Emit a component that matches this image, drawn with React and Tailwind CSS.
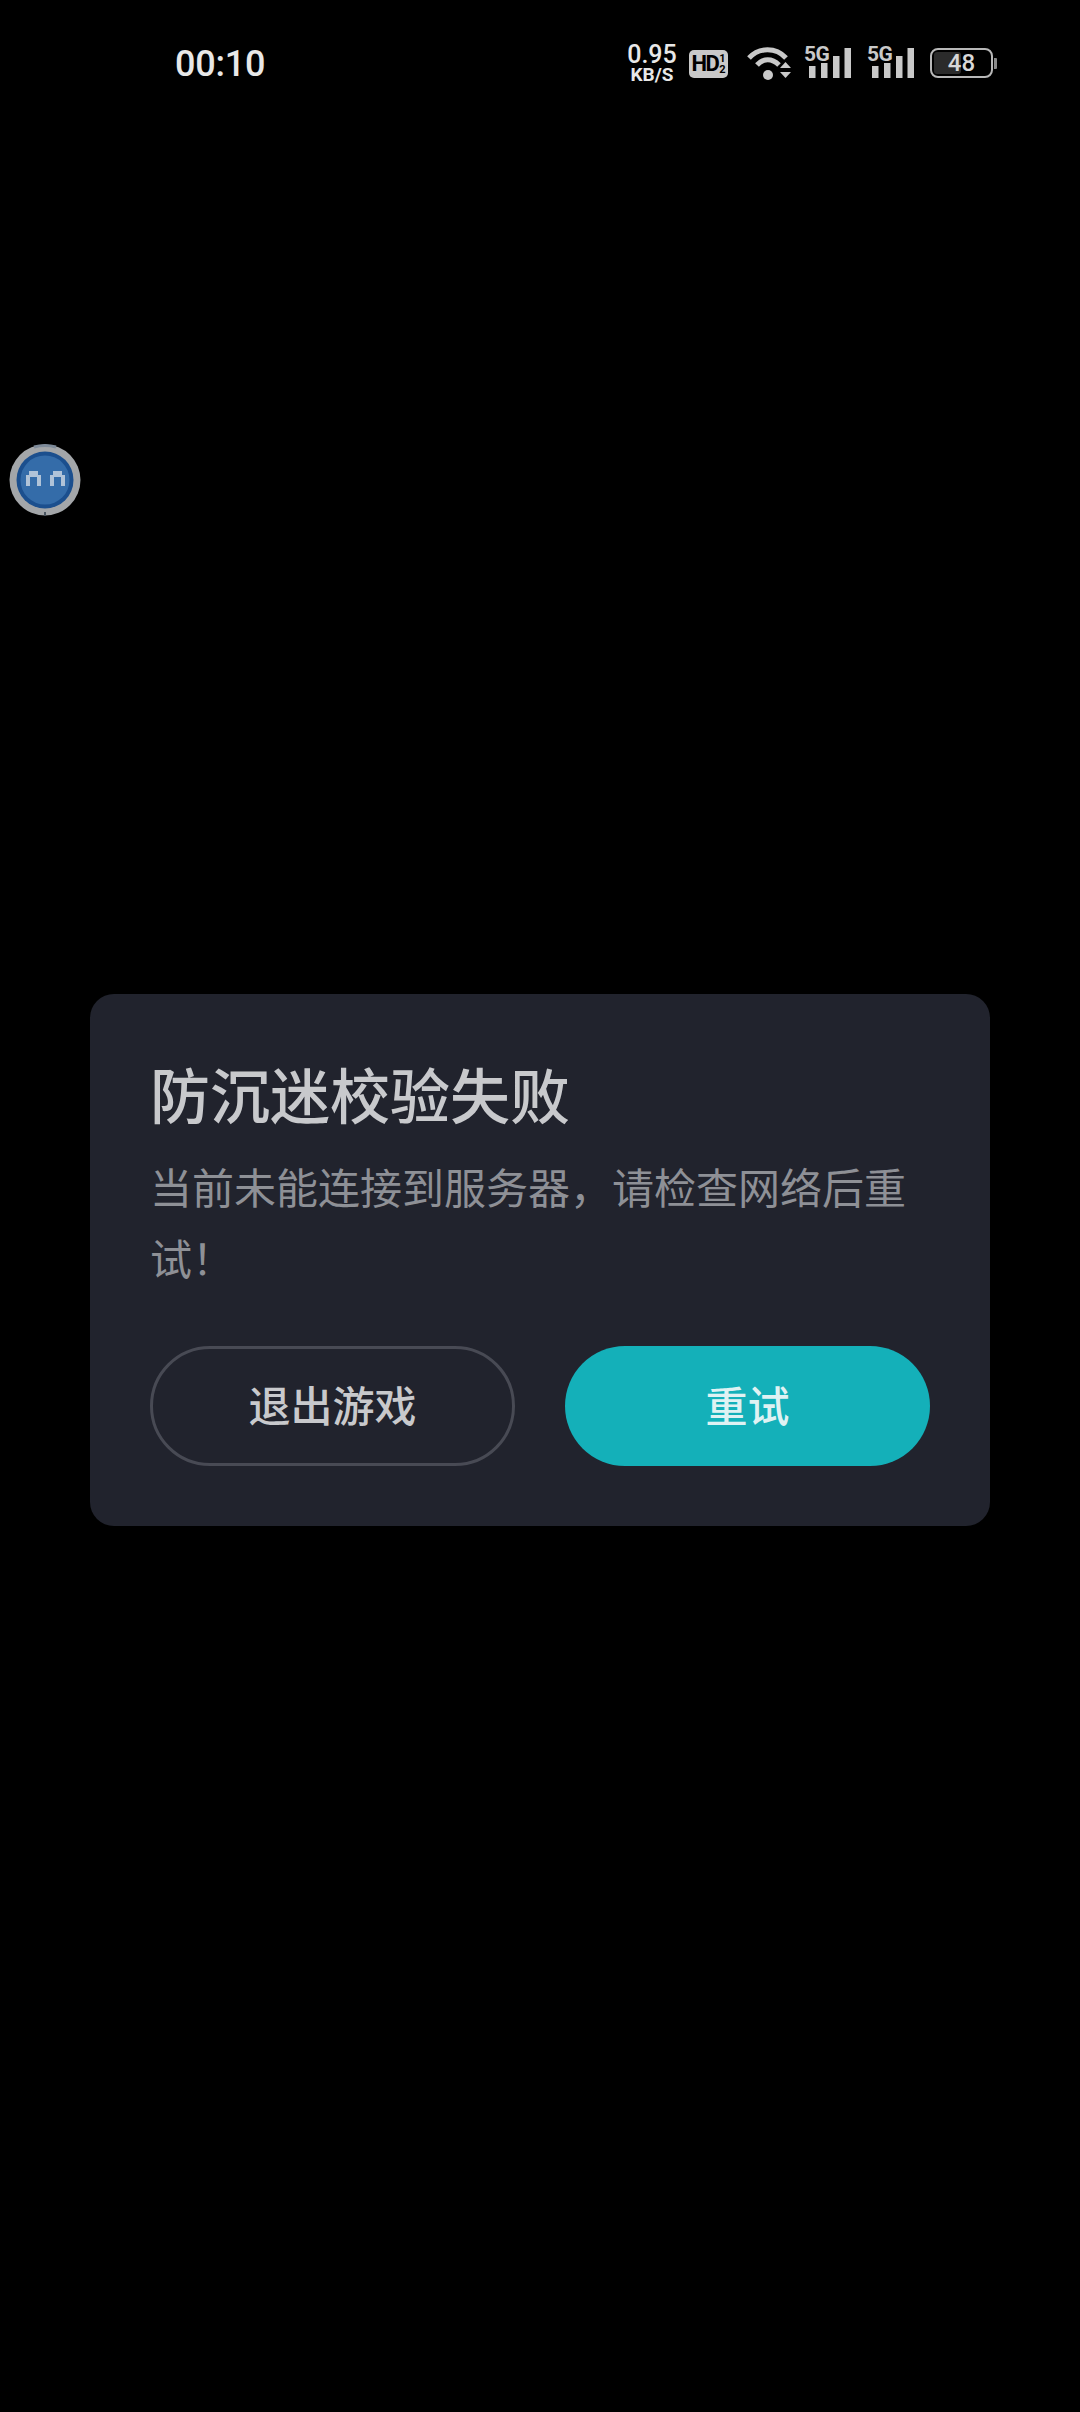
function SignalIcon() {
    return (
        <div className="relative h-[34px] w-[48px]">
            <span className="absolute left-[-1px] top-[-3px] text-[21px] font-bold leading-[22px] tracking-[-0.5px] text-[#c9c9c9]">5G</span>
            <svg width="48" height="34" viewBox="0 0 48 34" className="block">
                <rect x="4" y="20" width="6.5" height="12" fill="#c9c9c9" />
                <rect x="16" y="17" width="6.5" height="15" fill="#c9c9c9" />
                <rect x="28" y="10" width="6.5" height="22" fill="#c9c9c9" />
                <rect x="39.5" y="2" width="6.5" height="30" fill="#c9c9c9" />
            </svg>
        </div>
    )
}

function WifiIcon() {
    return (
        <svg width="46" height="34" viewBox="0 0 46 34" className="block">
            <path d="M2 12 C 12 1, 29 1, 39 12" fill="none" stroke="#c9c9c9" strokeWidth="5" />
            <path d="M10 19 C 16 12, 25 12, 32 19" fill="none" stroke="#c9c9c9" strokeWidth="5" />
            <circle cx="21" cy="29" r="5" fill="#c9c9c9" />
            <path d="M33 22 L38.5 16 L44 22 Z" fill="#c9c9c9" />
            <path d="M33 26 L44 26 L38.5 32 Z" fill="#c9c9c9" />
        </svg>
    )
}

function StatusBar() {
    return (
        <div className="flex h-[128px] items-start pl-[175px] pt-[42px] text-[#e8e8e8]" style={{ fontFamily: "Roboto, sans-serif" }}>
            <span className="w-[453px] text-[36px] font-medium leading-[44px] tracking-[-0.2px]">00:10</span>
            <div className="flex w-[48px] flex-col items-center pt-[3px] font-medium">
                <span className="text-[25px] leading-[20px]">0.95</span>
                <span className="text-[19px] font-bold leading-[20px]">KB/S</span>
            </div>
            <div className="ml-[13px] mt-[8px] flex h-[28px] w-[39px] items-center justify-center rounded-[5px] bg-[#c9c9c9] text-black">
                <span className="text-[22px] font-bold leading-none tracking-[-1.5px]">HD</span>
                <span className="ml-[1px] flex flex-col items-center text-[11px] font-bold leading-[11px]">
                    <span>1</span>
                    <span>2</span>
                </span>
            </div>
            <div className="ml-[19px] mt-[4px]">
                <WifiIcon />
            </div>
            <div className="ml-[12px] mt-[4px]">
                <SignalIcon />
            </div>
            <div className="ml-[15px] mt-[4px]">
                <SignalIcon />
            </div>
            <div className="ml-[14px] mt-[6px] flex items-center">
                <div className="relative flex h-[30px] w-[63px] items-center justify-center overflow-hidden rounded-[8px] border-2 border-[#b8b8b8] p-[2px]">
                    <div className="absolute bottom-[2px] left-[2px] top-[2px] w-[27px] rounded-[3px] bg-[#2b2b2b]" />
                    <span className="relative text-[24px] font-medium leading-none text-[#d8d8d8]">48</span>
                </div>
                <div className="ml-[1px] h-[11px] w-[3px] rounded-r-[1px] bg-[#8a8a8a]" />
            </div>
        </div>
    )
}

function FloatingBall() {
    return (
        <div className="absolute left-[9px] top-[444px] h-[72px] w-[72px]">
            <svg width="72" height="72" viewBox="0 0 72 72" className="block">
                <circle cx="36" cy="36" r="35.5" fill="#a3a6a9" />
                <path d="M25 3 Q 36 0, 47 3" fill="none" stroke="#7d8a99" strokeWidth="3" />
                <rect x="35" y="68" width="2" height="4" fill="#4a5560" />
                <circle cx="36" cy="36" r="28.5" fill="#1b4f8e" />
                <circle cx="36" cy="36" r="24.5" fill="#346ca9" />
                <path d="M17 42 V31 H20 V27 H29 V31 H32 V42 H28 V33 H21 V42 Z" fill="#b0c3d8" />
                <path d="M41 42 V31 H44 V27 H53 V31 H56 V42 H52 V33 H45 V42 Z" fill="#b0c3d8" />
            </svg>
        </div>
    )
}

export default function App() {
    return (
        <div className="relative h-[2412px] w-[1080px] overflow-hidden bg-black" style={{ fontFamily: '"Noto Sans CJK SC", sans-serif' }}>
            <StatusBar />
            <FloatingBall />
            <div className="ml-[90px] mt-[866px] w-[900px] rounded-[24px] bg-[#21232d] px-[60px] pb-[60px] pt-[63px]">
                <h1 className="text-[60px] font-medium leading-[72px] text-[#c8c9cc]">防沉迷校验失败</h1>
                <p className="mt-[21px] text-[42px] leading-[71px] text-[#8e9096]">当前未能连接到服务器，请检查网络后重试！</p>
                <div className="mt-[54px] flex justify-between">
                    <button className="flex h-[120px] w-[365px] items-center justify-center rounded-full border-[3px] border-[#484a54] pb-[5px] text-[42px] font-medium text-[#c8c9cc]">
                        退出游戏
                    </button>
                    <button className="flex h-[120px] w-[365px] items-center justify-center rounded-full bg-[#14b0b9] pb-[5px] text-[42px] font-medium text-[#dff2f3]">
                        重试
                    </button>
                </div>
            </div>
        </div>
    )
}
